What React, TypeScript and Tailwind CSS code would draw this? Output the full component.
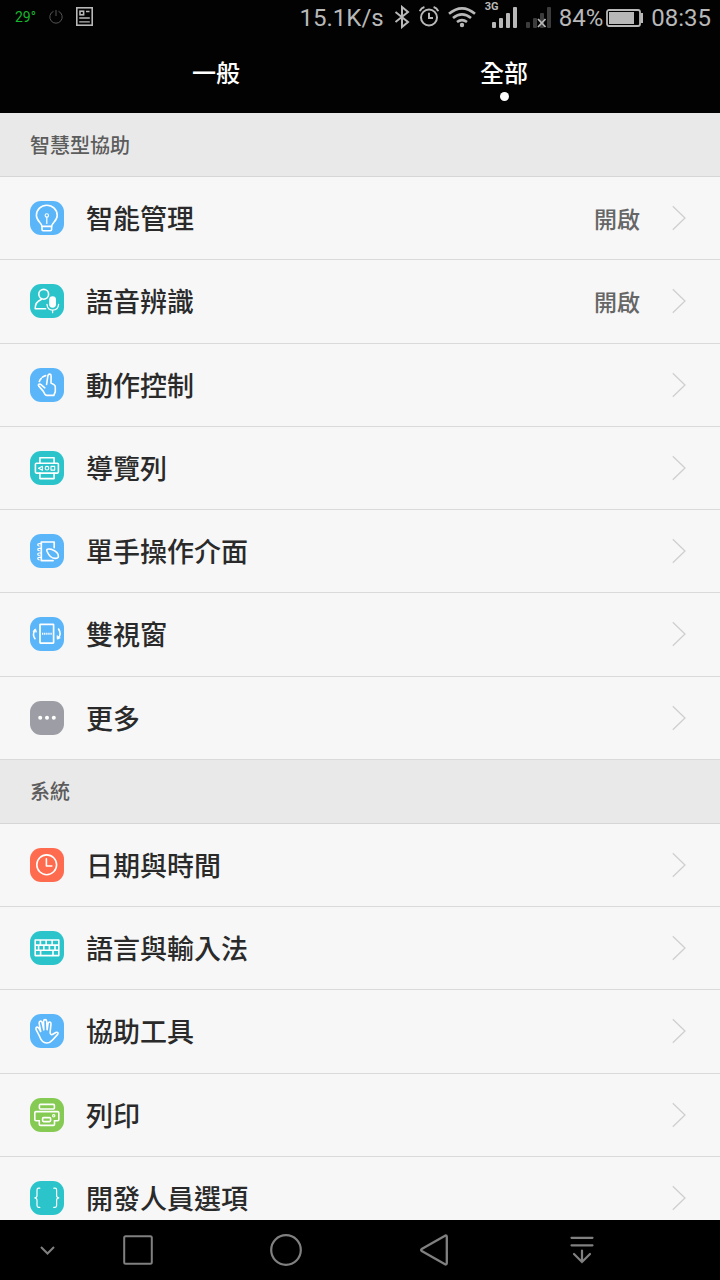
import React, { useState } from 'react';

interface SettingItem {
  id: string;
  label: string;
  value?: string;
  color: string;
  icon: React.ReactNode;
}

interface SettingGroup {
  title: string;
  grow: string;
  items: SettingItem[];
}

const BLUE = 'bg-[#5ab5f9]';
const TEAL = 'bg-[#2bc4cb]';

const GROUPS: SettingGroup[] = [
  {
    title: '智慧型協助',
    grow: 'grow-7',
    items: [
      {
        id: 'smart',
        label: '智能管理',
        value: '開啟',
        color: BLUE,
        icon: (
          <>
            <path d="M12 25.4c-.2-3.4-5.6-5.6-5.6-11a10.4 10.2 0 0 1 20.8 0c0 5.4-5.4 7.6-5.6 11z" />
            <path d="M12 25.4v3.100q0 1.200 1.200 1.200h7.200q1.200 0 1.200-1.200v-3.100" />
            <circle cx="16.800" cy="14.400" r="1.700" strokeWidth="1.100" />
            <path d="M16.800 16v6.500" strokeWidth="1.200" />
          </>
        ),
      },
      {
        id: 'voice',
        label: '語音辨識',
        value: '開啟',
        color: TEAL,
        icon: (
          <>
            <circle cx="13.700" cy="10.300" r="4.900" />
            <path d="M11.200 15.500c-3.700 1.500-6.200 5-6 9.300h10.400" />
            <rect x="19.200" y="12.300" width="6.800" height="11.400" rx="3.400" fill="currentColor" stroke="none" />
            <path d="M17 20.500c.4 3.800 2.600 5.600 5.600 5.600s5.600-1.800 6-5.600M22.600 26.200v2.500" strokeWidth="1.300" />
          </>
        ),
      },
      {
        id: 'motion',
        label: '動作控制',
        color: BLUE,
        icon: (
          <>
            <path d="M16.600 16.500l1.300-8.800q.5-1.800 1.900-1.600 1.400.2 1.300 2l-.1 6.900 2.900 1.600q1.400.9 1.400 2.500v4.500l-1.500 3.800h-7.200q-1-.1-1.700-1.200l-1.900-3.300-4.200-4.800q-.9-1.300.2-1.900 1-.5 2.300.6l3.500 3" />
            <path d="M9.300 13.400q.7-2 2-3.100M12.500 9.200q1.400-1.200 3.200-1.600" />
          </>
        ),
      },
      {
        id: 'navbar',
        label: '導覽列',
        color: TEAL,
        icon: (
          <>
            <rect x="5.400" y="12.300" width="23" height="9.800" rx="1" />
            <path d="M9.900 12.300V6.700h14.200v5.600M9.900 22.100v5.500h14.200v-5.500" />
            <path d="M12.400 15.200v4l-3.900-2z" strokeWidth="1.100" />
            <circle cx="17" cy="17.200" r="1.800" strokeWidth="1.100" />
            <rect x="21" y="15.400" width="3.700" height="3.700" strokeWidth="1.100" />
          </>
        ),
      },
      {
        id: 'onehand',
        label: '單手操作介面',
        color: BLUE,
        icon: (
          <>
            <path d="M24.200 13.600V8H11.300v18.600h11.800" strokeWidth="1.700" />
            <path
              d="M11 9.600H9.200q-1.500 0-1.500 1.200T9.200 12M11 14.300H9.200q-1.500 0-1.500 1.200t1.500 1.200M11 19H9.200q-1.500 0-1.500 1.200t1.500 1.200M11 23.400H9.200q-1.500 0-1.500 1.200t1.500 1.200"
              strokeWidth="1.200"
            />
            <path d="M17 17.300q-1-2.600 2.200-2.300l2.600.4c3.300 1.300 6.700 4 6.600 6.800 0 1.600-1.200 2.300-3.200 2.200-4.200.2-6.700-3.600-8.200-7.100z" />
          </>
        ),
      },
      {
        id: 'dual',
        label: '雙視窗',
        color: BLUE,
        icon: (
          <>
            <rect x="10" y="7.300" width="13.600" height="18.800" rx=".5" strokeWidth="1.700" />
            <path d="M12 16.800h9.800" strokeDasharray="1.300 .8" strokeLinecap="butt" strokeWidth="2" />
            <path d="M5 21.700c-2-2.700-1.900-5.600-.2-8.700M28.600 12c2 3.200 2 6.500-.4 9.300" />
            <path d="M3.300 14.200l2.200-2.400 1 3zM27 18.900l.2 3.300 2.800-1.200z" fill="currentColor" strokeWidth=".7" />
          </>
        ),
      },
      {
        id: 'more',
        label: '更多',
        color: 'bg-[#9d9ea5]',
        icon: (
          <g fill="currentColor" stroke="none">
            <circle cx="10.200" cy="16.800" r="2" />
            <circle cx="17" cy="16.800" r="2" />
            <circle cx="23.800" cy="16.800" r="2" />
          </g>
        ),
      },
    ],
  },
  {
    title: '系統',
    grow: 'grow-5',
    items: [
      {
        id: 'datetime',
        label: '日期與時間',
        color: 'bg-[#ff6b4f]',
        icon: (
          <>
            <circle cx="16.700" cy="16.800" r="9.900" />
            <path d="M16.400 10.800v7.200h5.400" />
          </>
        ),
      },
      {
        id: 'language',
        label: '語言與輸入法',
        color: TEAL,
        icon: (
          <path d="M5.200 9h23.600v15.600H5.200zM5.200 14.100h23.600M5.200 19.200h23.600M10.400 9v5M16.200 9v5M22.200 9v5M13.800 14v5M8.600 14v5M19.400 14v5M25 14v5M10.600 19.200v5.400M23 19.200v5.400" />
        ),
      },
      {
        id: 'access',
        label: '協助工具',
        color: BLUE,
        icon: (
          <path d="M9.400 22L6 15.300q-.3-2 1.200-2.200 1-.1 1.600 1.100l1.900 3.300-1.600-8.300q0-1.900 1.300-2.100 1.300-.1 1.700 1.500l1.700 7.300-.3-8.600q.2-1.700 1.600-1.700t1.600 1.700l.4 8.500 1-6.400q.5-1.600 1.800-1.400 1.300.3 1.100 2l-.9 8.500q.2 2.500 2.300 2l3.400-2q1.600-.6 2.200.4.500 1-.8 2l-4.400 4.800q-3 3.300-6.300 3.300-4.500 0-7.100-7z" />
        ),
      },
      {
        id: 'print',
        label: '列印',
        color: 'bg-[#85ca52]',
        icon: (
          <>
            <rect x="9.400" y="6.400" width="15" height="4.600" rx="1" />
            <path d="M9.300 22.800H6q-1.200 0-1.200-1.200v-6.800q0-1.200 1.200-1.200h21.600q1.200 0 1.200 1.200v6.800q0 1.200-1.200 1.200h-3.100" />
            <path d="M9.300 22.800v3.400q0 1.200 1.200 1.200h12.800q1.200 0 1.200-1.200v-3.400" />
            <rect x="12.600" y="19.600" width="8" height="4" rx="1" />
            <circle cx="23.700" cy="17.800" r="1.200" strokeWidth="1.100" />
          </>
        ),
      },
      {
        id: 'developer',
        label: '開發人員選項',
        color: TEAL,
        icon: (
          <path
            d="M9.800 7.200H8.600q-1.600 0-1.600 1.800v5.500q0 2.200-2.200 2.300Q7 17 7 19.200v5.400q0 1.800 1.600 1.800h1.200M23.800 7.200H25q1.600 0 1.600 1.800v5.500q0 2.200 2.200 2.300-2.200.2-2.200 2.400v5.400q0 1.800-1.600 1.800h-1.200"
            strokeWidth="1.200"
          />
        ),
      },
    ],
  },
];

const StatusBar = () => (
  <div className="flex h-9 items-center justify-between pr-[9px] pl-[15px] font-['Roboto',sans-serif] text-[#b8b8b8]">
    <div className="flex items-center gap-[13px] pb-[3px]">
      <span className="text-sm text-[#16b62c]">29°</span>
      <svg className="size-[14px] text-[#555]" viewBox="0 0 14 14" fill="none" stroke="currentColor">
        <path d="M4.500 1.300a6.200 6.200 0 1 0 5 0M7 0v6" />
      </svg>
      <svg className="h-[19px] w-[17px]" viewBox="0 0 17 19" fill="none" stroke="currentColor" strokeWidth="1.600">
        <rect x=".8" y=".8" width="15.400" height="17.400" />
        <rect x="4" y="4.200" width="3.600" height="3.600" />
        <path d="M10 4.500h3.500M3.200 11h10.600M3.200 14.800h10.600" strokeWidth="1.300" />
      </svg>
    </div>

    <div className="flex items-center gap-2 text-2xl leading-8">
      <span>15.1K/s</span>
      <div className="flex items-center gap-[9px] pb-[3px] pl-[2px]">
        <svg className="h-6 w-4" viewBox="0 0 16 24" fill="none" stroke="currentColor" strokeWidth="2">
          <path d="M1.500 7l12.500 10-6 5V2l6 5L1.500 17" />
        </svg>
        <svg className="h-6 w-5" viewBox="0 0 20 24" fill="none" stroke="currentColor" strokeWidth="2">
          <circle cx="10" cy="12.500" r="8" />
          <path d="M10 7.800v5.200h4M.8 6.200Q2 3 5.400 2M19.200 6.200Q18 3 14.600 2" />
        </svg>
        <svg className="h-6 w-7" viewBox="0 0 28 24" fill="none" stroke="currentColor" strokeWidth="2.600">
          <path d="M1 8.800q13-11 26 0M5 13q9-7.400 18 0M9 17q5-3.800 10 0" />
          <circle cx="14" cy="20" r="2.200" fill="currentColor" stroke="none" />
        </svg>
        <div className="relative">
          <svg className="h-6 w-8" viewBox="0 0 32 24" fill="currentColor">
            <rect x="7" y="17" width="4" height="6" rx="1" />
            <rect x="14" y="13" width="4" height="10" rx="1" />
            <rect x="21" y="8" width="4" height="15" rx="1" />
            <rect x="28" y="2" width="4" height="21" rx="1" />
          </svg>
          <span className="absolute -top-1 left-0 text-[11px] leading-3 font-bold">3G</span>
        </div>
        <svg className="h-6 w-[25px]" viewBox="0 0 25 24" fill="#3c3c3c">
          <rect x="0" y="17" width="4" height="6" rx="1" />
          <rect x="7" y="13" width="4" height="10" rx="1" />
          <rect x="14" y="8" width="4" height="15" rx="1" />
          <rect x="21" y="2" width="4" height="21" rx="1" />
          <path d="M12 14l7.500 8M19.500 14L12 22" stroke="#b8b8b8" strokeWidth="1.800" />
        </svg>
      </div>
      <div className="flex items-center gap-[3px]">
        <span>84%</span>
        <svg className="h-[18px] w-[37px]" viewBox="0 0 37 18">
          <rect x="1" y="1" width="33" height="16" rx="2" fill="none" stroke="currentColor" strokeWidth="1.800" />
          <path d="M34.500 4H37v10h-2.500z" fill="currentColor" />
          <rect x="3" y="3" width="25" height="12" fill="currentColor" />
        </svg>
      </div>
      <span>08:35</span>
    </div>
  </div>
);

const SettingRow: React.FC<{ item: SettingItem }> = ({ item }) => (
  <li className="flex min-h-20 flex-1 border-b border-[#dadada]">
    <a href={`#${item.id}`} className="flex flex-1 items-center pr-[34px] pl-[30px]">
      <span className={`flex size-[34px] shrink-0 overflow-hidden rounded-[11px] text-white ${item.color}`}>
        <svg
          className="size-full"
          viewBox="0 0 34 34"
          fill="none"
          stroke="currentColor"
          strokeWidth="1.600"
          strokeLinecap="round"
          strokeLinejoin="round"
        >
          {item.icon}
        </svg>
      </span>
      <span className="ml-[22px] flex-1 text-[27px] leading-9 font-medium text-[#2a2a2a]">{item.label}</span>
      {item.value && <span className="text-[23px] leading-8 font-medium text-[#666]">{item.value}</span>}
      <svg className="ml-8 h-[26px] w-[14px] shrink-0" viewBox="0 0 14 26" fill="none" stroke="#cfcfcf" strokeWidth="1.300">
        <path d="M.8 1.200L13 13 .8 24.800" />
      </svg>
    </a>
  </li>
);

const NavBar = () => (
  <nav className="relative z-10 flex h-[60px] shrink-0 bg-black text-[#808080]">
    <button type="button" aria-label="Hide" className="flex w-16 items-center justify-center pl-[30px]">
      <svg className="h-[9px] w-[15px]" viewBox="0 0 15 9" fill="none" stroke="currentColor" strokeWidth="2">
        <path d="M1 1l6.500 6.500L14 1" />
      </svg>
    </button>
    <div className="mr-16 grid flex-1 grid-cols-4 place-items-center">
      <button type="button" aria-label="Recent">
        <svg className="size-[30px]" viewBox="0 0 30 30" fill="none" stroke="currentColor" strokeWidth="2">
          <rect x="1.200" y="1.200" width="27.600" height="27.600" rx="1.500" />
        </svg>
      </button>
      <button type="button" aria-label="Home">
        <svg className="size-8" viewBox="0 0 32 32" fill="none" stroke="currentColor" strokeWidth="2.200">
          <circle cx="16" cy="16" r="14.800" />
        </svg>
      </button>
      <button type="button" aria-label="Back">
        <svg className="h-8 w-[28px]" viewBox="0 0 28 32" fill="none" stroke="currentColor" strokeWidth="2.300" strokeLinejoin="round">
          <path d="M25.500 1.500q1.300 0 1.300 1.300v26.400q0 1.300-1.300 1.300L1.700 17q-1-1 0-2z" />
        </svg>
      </button>
      <button type="button" aria-label="Notifications">
        <svg className="h-7 w-6" viewBox="0 0 24 28" fill="none" stroke="currentColor" strokeWidth="2.200" strokeLinecap="round">
          <path d="M1.500 1.800h21M1.500 9.300h21M12 14.500V26M4 18l8 8 8-8" />
        </svg>
      </button>
    </div>
  </nav>
);

export default function App() {
  const [tab, setTab] = useState('全部');

  return (
    <div className="flex h-screen flex-col overflow-hidden bg-[#f7f7f7] font-['Noto_Sans_CJK_TC',sans-serif]">
      <header className="shrink-0 bg-[#020202]">
        <StatusBar />
        <div role="tablist" className="grid grid-cols-2 items-start px-[10%]">
          {['一般', '全部'].map((name) => (
            <button
              key={name}
              type="button"
              role="tab"
              aria-selected={tab === name}
              onClick={() => setTab(name)}
              className="flex h-[77px] flex-col items-center gap-1 pt-5 text-2xl leading-8 font-medium text-white"
            >
              {name}
              {tab === name && <span className="size-[9px] rounded-full bg-white" />}
            </button>
          ))}
        </div>
      </header>

      {/* the list runs on under the navigation bar */}
      <main className="-mb-5 flex min-h-0 flex-1 flex-col overflow-y-auto">
        {GROUPS.map((group) => (
          <section key={group.title} className={`flex flex-col ${group.grow}`}>
            <h2 className="flex h-16 shrink-0 items-center border-b border-[#d6d6d6] bg-[#e9e9e9] px-[30px] text-xl font-medium text-[#5c5c5c]">
              {group.title}
            </h2>
            <ul className="flex flex-1 flex-col">
              {group.items.map((item) => (
                <SettingRow key={item.id} item={item} />
              ))}
            </ul>
          </section>
        ))}
      </main>

      <NavBar />
    </div>
  );
}
